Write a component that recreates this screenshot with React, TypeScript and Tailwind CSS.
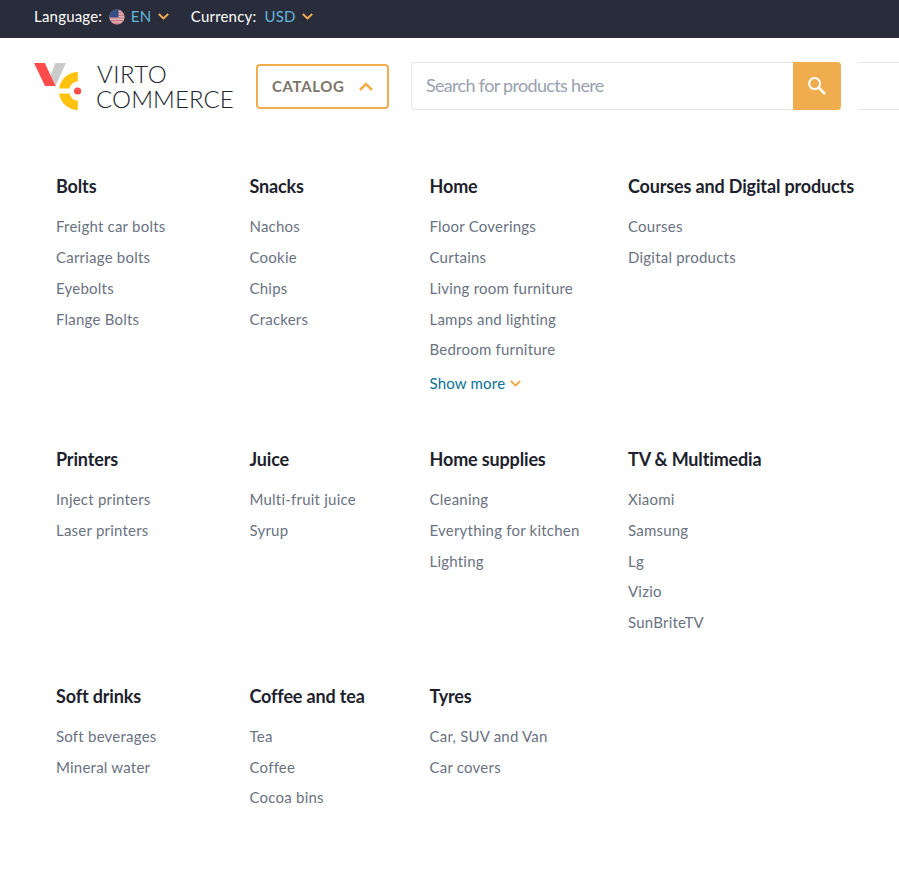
type Category = { title: string; items: string[]; more?: boolean };

const categories: Category[] = [
  { title: "Bolts", items: ["Freight car bolts", "Carriage bolts", "Eyebolts", "Flange Bolts"] },
  { title: "Snacks", items: ["Nachos", "Cookie", "Chips", "Crackers"] },
  {
    title: "Home",
    items: ["Floor Coverings", "Curtains", "Living room furniture", "Lamps and lighting", "Bedroom furniture"],
    more: true,
  },
  { title: "Courses and Digital products", items: ["Courses", "Digital products"] },
  { title: "Printers", items: ["Inject printers", "Laser printers"] },
  { title: "Juice", items: ["Multi-fruit juice", "Syrup"] },
  { title: "Home supplies", items: ["Cleaning", "Everything for kitchen", "Lighting"] },
  { title: "TV & Multimedia", items: ["Xiaomi", "Samsung", "Lg", "Vizio", "SunBriteTV"] },
  { title: "Soft drinks", items: ["Soft beverages", "Mineral water"] },
  { title: "Coffee and tea", items: ["Tea", "Coffee", "Cocoa bins"] },
  { title: "Tyres", items: ["Car, SUV and Van", "Car covers"] },
];

function Chevron({ className }: { className: string }) {
  return (
    <svg viewBox="0 0 11 7" fill="none" stroke="#f0ad4e" strokeWidth="2" className={className}>
      <path d="M0.8 1 L5.5 5.4 L10.2 1" />
    </svg>
  );
}

function Flag() {
  return (
    <svg viewBox="0 0 16 16" className="ml-[7px] h-4 w-4">
      <defs>
        <clipPath id="flag-circle">
          <circle cx="8" cy="8" r="7.6" />
        </clipPath>
      </defs>
      <g clipPath="url(#flag-circle)">
        <rect width="16" height="16" fill="#dcb3b9" />
        <path d="M0 1.2h16M0 3.8h16M0 6.4h16M0 9h16M0 11.6h16M0 14.2h16" stroke="#c9747e" strokeWidth="1.1" />
        <rect width="9.5" height="8.4" fill="#304c82" />
        <path d="M2 2.5h6M1 4.7h7M2 6.8h6" stroke="#526c9c" strokeWidth="0.6" strokeDasharray="0.8 1.2" />
      </g>
    </svg>
  );
}

function Logo() {
  return (
    <div className="flex h-12 w-[222px] shrink-0">
      <svg viewBox="0 0 48 48" className="h-12 w-12 shrink-0">
        <path d="M21.3 1h10.7L21.2 24.5L16.5 13.5z" fill="#cbcbcb" />
        <path d="M0 1h10.8L21.6 24H11z" fill="#ff4b4b" />
        <path d="M43.8 10v9.2a9.8 9.8 0 0 0-8.4 7.3H25.1A19 19 0 0 1 43.8 10z" fill="#ffc20e" />
        <path d="M43.8 48v-9.2a9.8 9.8 0 0 1-8.4-7.3H25.1A19 19 0 0 0 43.8 48z" fill="#ffc20e" />
        <circle cx="43.6" cy="29" r="3.6" fill="#ff4b4b" />
      </svg>
      <div className="-mt-px ml-[14px] flex flex-col whitespace-nowrap text-[24px] font-light leading-[25px] text-[#20242e]">
        <span className="pl-px tracking-[0.5px]">VIRTO</span>
        <span className="tracking-[0.1px]">COMMERCE</span>
      </div>
    </div>
  );
}

export default function App() {
  return (
    <div className="h-[873px] w-full overflow-hidden bg-white font-['Lato',sans-serif]">
      <div className="flex h-[38px] items-center bg-[#292c3a] pb-[5px] pl-[34px] text-[15px] tracking-[0.2px] text-white">
        <span>Language:</span>
        <Flag />
        <span className="ml-[5.5px] text-[#62b6dc]">EN</span>
        <Chevron className="ml-[6.5px] h-[7px] w-[11px]" />
        <span className="ml-[22px]">Currency:</span>
        <span className="ml-[8px] text-[#62b6dc]">USD</span>
        <Chevron className="ml-[6px] h-[7px] w-[11px]" />
      </div>

      <header className="flex items-start pl-[34px] pt-6">
        <Logo />
        <button className="mt-[2px] flex h-[45px] w-[133px] shrink-0 items-center rounded-[4px] border-2 border-[#f0ad4e] pb-px pl-[14px] text-[15px] font-bold tracking-[0.65px] text-[#7d7468]">
          CATALOG
          <svg viewBox="0 0 14 9" fill="none" stroke="#f0ad4e" strokeWidth="2.6" className="ml-[14px] h-[9px] w-[14px]">
            <path d="M1 8 L7 2 L13 8" />
          </svg>
        </button>
        <div className="ml-[22px] flex h-12 w-[430px] shrink-0">
          <div className="flex flex-1 items-center rounded-l-[4px] border border-r-0 border-gray-200 pb-px pl-[14px] text-[18px] tracking-[-0.68px] text-gray-400">
            Search for products here
          </div>
          <button className="flex w-12 items-center justify-center rounded-r-[4px] bg-[#f0ad4e]">
            <svg viewBox="0 0 18 18" fill="none" stroke="white" strokeWidth="2" className="h-[18px] w-[18px]">
              <circle cx="6.6" cy="6.6" r="5.5" />
              <path d="M10.7 10.7 L17 17" strokeWidth="2.6" />
            </svg>
          </button>
        </div>
        <div className="ml-[17px] h-12 flex-1 border-y border-gray-200" />
      </header>

      <nav className="grid grid-cols-[193.5px_180px_198.5px_240px] gap-y-[43.8px] pl-14 pt-[62.2px]">
        {categories.map((category) => (
          <section key={category.title}>
            <h3 className="whitespace-nowrap text-[18px] font-bold leading-[28px] tracking-[-0.15px] text-[#211f2d]">
              {category.title}
            </h3>
            <ul className="mt-[11px] text-[15px] leading-[30.8px] tracking-[0.22px] text-gray-500">
              {category.items.map((item) => (
                <li key={item}>{item}</li>
              ))}
            </ul>
            {category.more && (
              <div className="flex h-9 items-center text-[15px] tracking-[0.2px] text-[#0c7196]">
                Show more
                <Chevron className="ml-[5px] mt-px h-[7px] w-[11px]" />
              </div>
            )}
          </section>
        ))}
      </nav>
    </div>
  );
}
